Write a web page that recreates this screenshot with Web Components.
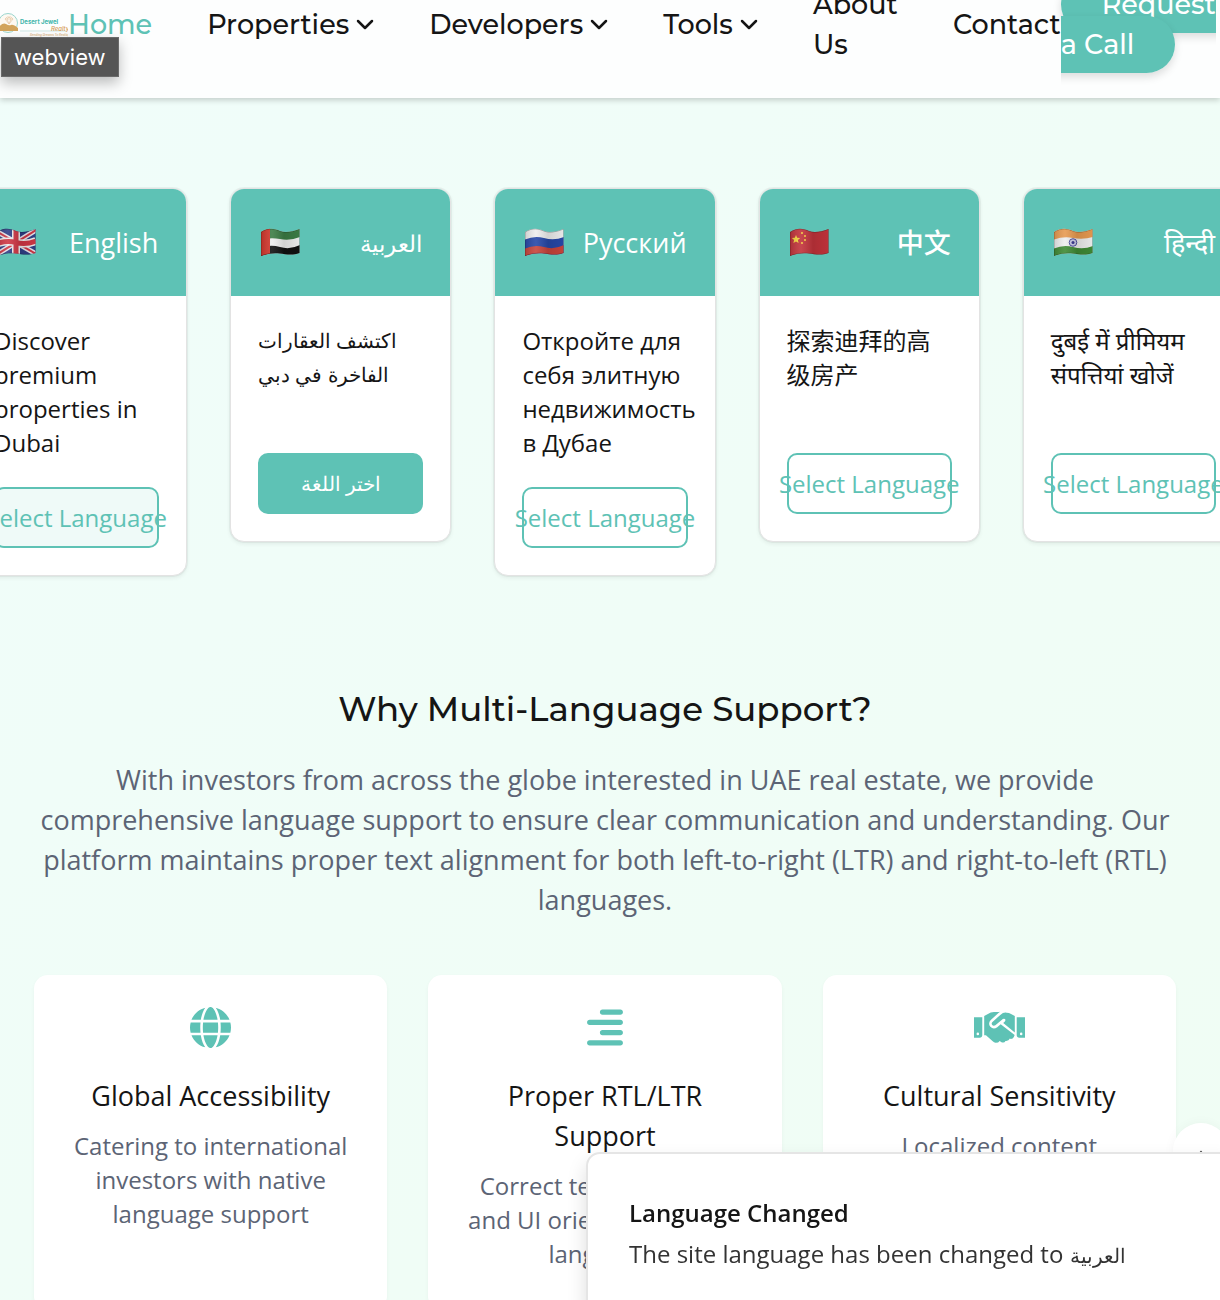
<!DOCTYPE html>
<html lang="en">
<head>
<meta charset="utf-8">
<title>Desert Jewel Realty</title>
<style>
:root{--teal:#5ec2b5;--ink:#151515;--muted:#5c6475;--display:Montserrat,Inter,sans-serif}
body{margin:0;font-family:"Open Sans","Noto Sans","Noto Sans CJK SC",sans-serif;color:var(--ink);background:#f0fdf7}
</style>
</head>
<body>
<dj-page></dj-page>
<script>
const define = (name, html, init) => {
  const tpl = document.createElement('template');
  tpl.innerHTML = html;
  customElements.define(name, class extends HTMLElement {
    connectedCallback() {
      if (this.shadowRoot) return;
      this.attachShadow({mode: 'open'}).append(tpl.content.cloneNode(true));
      if (init) init.call(this, this.shadowRoot);
    }
  });
};

const wave = 'M1 4C9 -1 15 1 20 3S32 4 39.500 1V25C32 28 25 26 20 25.500S9 25 1 28Z';
const flags = {
  gb: `<rect width="40" height="30" fill="#2f3f87"/><path d="M0 3 40 26M0 27 40 2" stroke="#e8e4ea" stroke-width="5"/><path d="M0 3 40 26M0 27 40 2" stroke="#cf3745" stroke-width="2"/><path d="M20 0V30M0 16Q10 12 20 14.500T40 13" fill="none" stroke="#eee" stroke-width="8"/><path d="M20 0V30M0 16Q10 12 20 14.500T40 13" fill="none" stroke="#cf3745" stroke-width="5"/>`,
  ae: `<rect width="40" height="30" fill="#eee"/><path d="M0 -2H40V9Q30 13 20 11T0 12Z" fill="#3c7d45"/><path d="M0 20Q10 16 20 19T40 17V30H0Z" fill="#111"/><rect width="10" height="30" fill="#d2352b"/>`,
  ru: `<rect width="40" height="30" fill="#eee"/><path d="M0 12Q10 7 20 10T40 9V30H0Z" fill="#2748a8"/><path d="M0 21Q10 16 20 19T40 17V30H0Z" fill="#c9443b"/>`,
  cn: `<rect width="40" height="30" fill="#c2333b"/><path d="M7 7l1.200 2.800 3 .2-2.300 2 .7 3L7 13.400 4.400 15l.7-3-2.300-2 3-.2z" fill="#f5d33c"/><g fill="#f5d33c"><circle cx="13" cy="5" r="1"/><circle cx="16" cy="8" r="1"/><circle cx="16" cy="12" r="1"/><circle cx="13" cy="15" r="1"/></g>`,
  in: `<rect width="40" height="30" fill="#eee"/><path d="M0 -2H40V9Q30 12 20 10T0 12Z" fill="#e79a50"/><path d="M0 21Q10 16 20 19T40 18V30H0Z" fill="#3f8a35"/><circle cx="20" cy="14.500" r="3.800" fill="#c9c9e6" stroke="#4b4ba0"/><circle cx="20" cy="14.500" r="1.500" fill="#33338c"/>`
};
define('dj-flag', `<style>:host{display:block;flex:none;width:40px;height:30px}svg{display:block}</style><div></div>`, function (root) {
  root.querySelector('div').innerHTML = `<svg width="40" height="30" viewBox="0 0 40 30" aria-hidden="true"><defs><clipPath id="w"><path d="${wave}"/></clipPath><linearGradient id="s"><stop offset="0" stop-opacity=".15"/><stop offset=".3" stop-color="#fff" stop-opacity=".1"/><stop offset=".6" stop-opacity=".12"/><stop offset="1" stop-opacity=".03"/></linearGradient></defs><g clip-path="url(#w)">${flags[this.getAttribute('country')] || ''}<rect width="40" height="30" fill="url(#s)"/><path d="${wave}" fill="none" stroke="#000" stroke-opacity=".3"/></g></svg>`;
});

define('dj-logo', `<style>:host{display:block;flex:none;width:68px;height:40px;overflow:hidden}svg{display:block}</style>
<svg width="68" height="40" viewBox="0 0 68 40" role="img" aria-label="Desert Jewel Realty">
<circle cx="8" cy="18" r="9.500" fill="#fdf9f2" stroke="#9ad6ce" stroke-width="1"/>
<path d="M5 14l2-2h4l2 2-4 5zM5 14h8M9 19l-2-5 2-2 2 2z" fill="none" stroke="#e6c9a8" stroke-width=".7"/>
<path d="M-1 22Q3 17 6 19T11 20T18 23V26H-1z" fill="#d2a45c"/>
<path d="M20 26H66" stroke="#b9dedb" stroke-width=".7"/>
<g font-family="Inter,sans-serif"><text x="20" y="19" font-size="6" font-weight="700" fill="#42b5ab">Desert Jewel</text><text x="51" y="26" font-size="6" font-style="italic" font-weight="500" fill="#d69a55">Realty</text><text x="30" y="31" font-size="3" font-weight="600" font-style="italic" fill="#dfb98a">Bending Dreams To Reality</text></g></svg>`);

define('dj-nav-item', `<style>
:host{display:block;flex:none}
:host([wrap]){width:85px}
a{display:flex;align-items:center;gap:7px;color:inherit;text-decoration:none}
svg{display:none}:host([menu]) svg{display:block}
</style><a href="#"><slot></slot><svg width="18" height="12" viewBox="0 0 18 12" fill="none" stroke="currentColor" stroke-width="2.500" stroke-linecap="round" stroke-linejoin="round" aria-hidden="true"><path d="M2 2l7 7 7-7"/></svg></a>`);

define('dj-header', `<style>
:host{display:block;position:relative;z-index:2;height:98px;background:#fdfefe;box-shadow:0 2px 6px #0003;font:500 27px/40px var(--display)}
nav{display:flex;align-items:center;height:50px}
.links{display:flex;align-items:center;gap:55px;flex:none}
.active{color:var(--teal)}
.call{flex:1;min-width:0;margin-right:2px}
.call a{color:#fff;background:var(--teal);text-decoration:none;padding:12px 41px;border-radius:40px;box-shadow:0 4px 8px #0002}
</style>
<nav aria-label="Main"><dj-logo></dj-logo><div class="links">
<dj-nav-item class="active">Home</dj-nav-item><dj-nav-item menu>Properties</dj-nav-item><dj-nav-item menu>Developers</dj-nav-item><dj-nav-item menu>Tools</dj-nav-item><dj-nav-item wrap>About Us</dj-nav-item><dj-nav-item>Contact</dj-nav-item></div>
<div class="call"><a href="#">Request a Call</a></div></nav>`);

define('dj-language-card', `<style>
:host{display:block;min-width:0;box-sizing:border-box;border:1px solid #e3e3e3;border-radius:14px;overflow:hidden;background:#fff;box-shadow:0 0 0 1px #0000000a,0 2px 4px #0001}
header{display:flex;align-items:center;justify-content:space-between;height:107px;padding:0 28px 0 29px;background:var(--teal);color:#fff}
h3{margin:0;font-size:27px;line-height:40px;font-weight:400;white-space:nowrap}
:host([lang=ar]) h3{font-size:23px}
:host([lang=zh]) h3{font-weight:500}
.body{padding:28px 27px 27px}
p{margin:0 0 27px;min-height:102px;font-size:24px;line-height:34px}
:host([lang=ar]) p,:host([lang=ar]) button{font-size:20px}
button{display:flex;align-items:center;justify-content:center;box-sizing:border-box;width:100%;height:61px;padding:0;border:2px solid var(--teal);border-radius:10px;background:#fff;color:var(--teal);font-family:inherit;font-size:24px;line-height:34px;white-space:nowrap}
:host([hover]) button{background:#effaf8}
:host([selected]) button{background:var(--teal);color:#fff}
</style><header><h3><slot name="name"></slot></h3></header><div class="body"><p><slot></slot></p><button type="button"></button></div>`, function (root) {
  const flag = document.createElement('dj-flag');
  flag.setAttribute('country', this.getAttribute('country'));
  root.querySelector('header').prepend(flag);
  root.querySelector('button').textContent = this.getAttribute('action') || 'Select Language';
});

const icons = {
  globe: `<svg width="41" height="41" viewBox="0 0 512 512"><path fill="currentColor" d="M352 256c0 22.200-1.200 43.600-3.300 64H163.300c-2.200-20.400-3.300-41.800-3.300-64s1.200-43.600 3.300-64H348.700c2.200 20.400 3.300 41.800 3.300 64zm28.800-64H503.900c5.300 20.500 8.100 41.900 8.100 64s-2.800 43.500-8.100 64H380.800c2.100-20.600 3.200-42 3.200-64s-1.100-43.400-3.200-64zm112.600-32H376.700c-10-63.900-29.800-117.400-55.300-151.600c78.300 20.700 142 77.500 171.900 151.600zm-149.100 0H167.700c6.100-36.400 15.500-68.600 27-94.700c10.500-23.600 22.200-40.700 33.500-51.500C239.400 3.200 248.700 0 256 0s16.600 3.200 27.800 13.800c11.300 10.800 23 27.900 33.500 51.500c11.600 26 20.900 58.200 27 94.700zm-209 0H18.600C48.600 85.900 112.200 29.100 190.600 8.400C165.100 42.600 145.300 96.100 135.300 160zM8.100 192H131.200c-2.100 20.600-3.200 42-3.200 64s1.100 43.400 3.200 64H8.100C2.800 299.500 0 278.100 0 256s2.800-43.500 8.100-64zM194.700 446.600c-11.600-26-20.900-58.200-27-94.600H344.300c-6.100 36.400-15.500 68.600-27 94.600c-10.500 23.600-22.200 40.700-33.500 51.500C272.600 508.800 263.300 512 256 512s-16.600-3.200-27.800-13.800c-11.300-10.800-23-27.900-33.500-51.500zM135.300 352c10 63.900 29.800 117.400 55.300 151.600C112.200 482.900 48.600 426.100 18.600 352H135.300zm358.100 0c-30 74.100-93.600 130.900-171.900 151.600c25.500-34.200 45.200-87.700 55.300-151.600H493.400z"/></svg>`,
  align: `<svg width="36" height="41" viewBox="0 0 448 512"><path fill="currentColor" d="M448 64c0 17.700-14.300 32-32 32H192c-17.700 0-32-14.300-32-32s14.300-32 32-32H416c17.700 0 32 14.300 32 32zm0 256c0 17.700-14.300 32-32 32H192c-17.700 0-32-14.300-32-32s14.300-32 32-32H416c17.700 0 32 14.300 32 32zM0 192c0-17.700 14.300-32 32-32H416c17.700 0 32 14.300 32 32s-14.300 32-32 32H32c-17.700 0-32-14.300-32-32zM448 448c0 17.700-14.300 32-32 32H32c-17.700 0-32-14.300-32-32s14.300-32 32-32H416c17.700 0 32 14.300 32 32z"/></svg>`,
  hands: `<svg width="51" height="41" viewBox="0 0 640 512"><path fill="currentColor" d="M0 128H104V352c0 17.700-14.300 32-32 32H0zM48 320a16 16 0 1 0 0 32 16 16 0 1 0 0-32zM536 128H640V384H568c-17.700 0-32-14.300-32-32zM592 320a16 16 0 1 0 0 32 16 16 0 1 0 0-32z" fill-rule="evenodd"/><path fill="currentColor" d="M128 112L180 82Q205 60 250 60H310Q335 58 310 72L210 162Q172 205 205 248Q245 285 292 252L335 215L510 350Q500 385 485 395Q460 405 450 395Q435 430 395 425Q380 455 345 440L322 425Q305 450 270 448Q250 445 235 430L150 352H128zM512 112V318L367 198L390 178Q400 160 388 150Q376 140 362 150L268 228Q242 242 226 220Q215 200 232 186L330 98Q370 62 410 70Q440 70 465 88z"/></svg>`
};
define('dj-feature', `<style>
:host{display:block;min-width:0;box-sizing:border-box;height:335px;padding:32px 27px 27px;border-radius:14px;background:#fff;box-shadow:0 2px 4px #0000000a;text-align:center}
.icon{height:41px;display:flex;justify-content:center;color:var(--teal);margin-bottom:28px}
h3{margin:0 0 13px;font-weight:400;font-size:27px;line-height:40px}
p{margin:0;font-size:24px;line-height:34px;color:var(--muted)}
</style><div class="icon" aria-hidden="true"></div><h3><slot name="title"></slot></h3><p><slot></slot></p>`, function (root) {
  root.querySelector('.icon').innerHTML = icons[this.getAttribute('icon')];
});

define('dj-toast', `<style>
:host{display:block;position:fixed;z-index:4;left:586px;right:-14px;top:1152px;bottom:-14px;box-sizing:border-box;padding:42px 41px;border:2px solid #e5e5e5;border-radius:14px;background:#fff;box-shadow:0 10px 20px #0002}
strong{display:block;font-size:24px;line-height:34px;font-weight:600;margin-bottom:7px}
p{margin:0;font-size:24px;line-height:34px;color:#333}
::slotted([lang=ar]){font-size:20px}
</style><div role="status"><strong><slot name="title"></slot></strong><p><slot></slot></p></div>`);

define('dj-tooltip', `<style>:host{display:block;position:absolute;z-index:5;left:1px;top:37px;box-sizing:border-box;padding:1px 12px;border:1px solid #6a6a6a;background:#555;color:#fff;font:400 22px/36px Inter,sans-serif;box-shadow:0 6px 14px #0004}</style><slot></slot>`);

define('dj-to-top', `<style>:host{display:block;position:fixed;z-index:3;left:1173px;top:1123px}
button{display:flex;align-items:center;justify-content:center;box-sizing:border-box;width:56px;height:56px;padding:14px 0 0;border:0;border-radius:50%;background:#fff;box-shadow:0 0 12px #0000000a;color:#444}</style>
<button type="button" aria-label="Back to top"><svg width="16" height="16" viewBox="0 0 16 16" fill="none" stroke="currentColor" stroke-width="2"><path d="M3 8l5-6 5 6"/></svg></button>`);

define('dj-page', `<style>
:host{display:block;position:relative;height:100vh;overflow:hidden;background:linear-gradient(135deg,#f0fdfa,#f0fdf4)}
main{padding:90px 44px 0 34px}
.cards{display:grid;grid-template-columns:repeat(5,minmax(0,1fr));align-items:start;gap:43px;margin:0 -68px}
h2{margin:109px 0 27px;text-align:center;font:500 34px/48px var(--display)}
.lead{margin:0 0 55px;text-align:center;font-size:27px;line-height:40px;color:var(--muted)}
.features{display:grid;grid-template-columns:repeat(3,minmax(0,1fr));gap:41px}
</style>
<dj-header></dj-header>
<dj-tooltip>webview</dj-tooltip>
<main>
<section class="cards">
<dj-language-card country="gb" hover><span slot="name">English</span>Discover premium properties in Dubai</dj-language-card>
<dj-language-card country="ae" lang="ar" selected action="اختر اللغة"><span slot="name">العربية</span>اكتشف العقارات الفاخرة في دبي</dj-language-card>
<dj-language-card country="ru" lang="ru"><span slot="name">Русский</span>Откройте для себя элитную недвижимость в Дубае</dj-language-card>
<dj-language-card country="cn" lang="zh"><span slot="name">中文</span>探索迪拜的高级房产</dj-language-card>
<dj-language-card country="in" lang="hi"><span slot="name">हिन्दी</span>दुबई में प्रीमियम संपत्तियां खोजें</dj-language-card>
</section>
<h2>Why Multi-Language Support?</h2>
<p class="lead">With investors from across the globe interested in UAE real estate, we provide comprehensive language support to ensure clear communication and understanding. Our platform maintains proper text alignment for both left-to-right (LTR) and right-to-left (RTL) languages.</p>
<section class="features">
<dj-feature icon="globe"><span slot="title">Global Accessibility</span>Catering to international investors with native language support</dj-feature>
<dj-feature icon="align"><span slot="title">Proper RTL/LTR Support</span>Correct text alignment and UI orientation for all languages</dj-feature>
<dj-feature icon="hands"><span slot="title">Cultural Sensitivity</span>Localized content</dj-feature>
</section>
</main>
<dj-to-top></dj-to-top>
<dj-toast><span slot="title">Language Changed</span>The site language has been changed to <span lang="ar">العربية</span></dj-toast>`);
</script>
</body>
</html>
